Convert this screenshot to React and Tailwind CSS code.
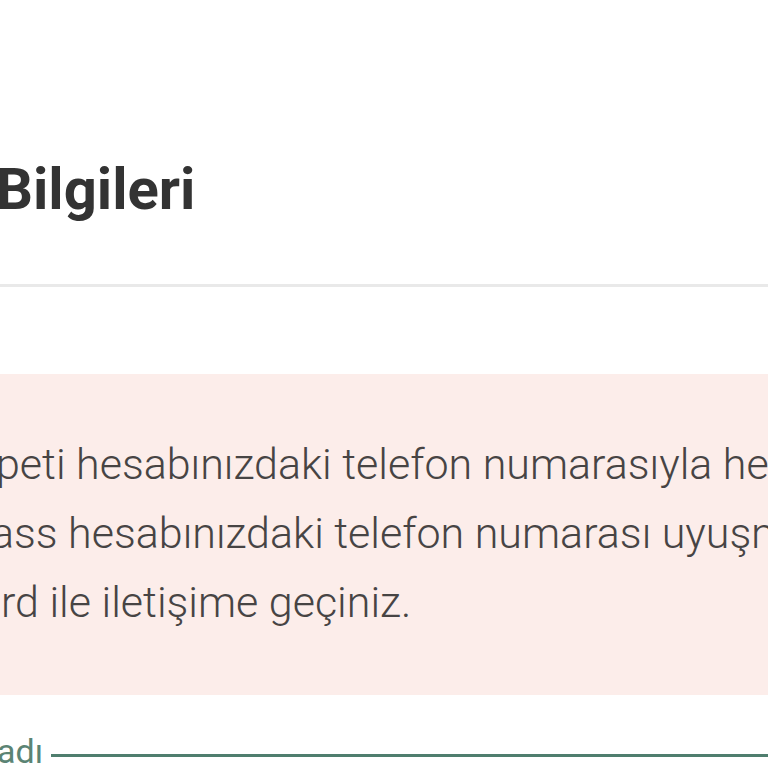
import React from "react";

const lines = [
  { text: "peti hesabınızdaki telefon numarasıyla hesabınızdaki", shift: "-ml-[4px]" },
  { text: "ass hesabınızdaki telefon numarası uyuşmuyor", shift: "-ml-[9px]" },
  { text: "rd ile iletişime geçiniz.", shift: "ml-[1px]" },
];

const App = () => {
  return (
    <div className="w-[768px] h-[768px] overflow-hidden bg-white font-['Roboto',sans-serif]">
      {/* Başlık */}
      <div className="pt-[155px]">
        <h1 className="-ml-[4px] whitespace-nowrap text-[58px] leading-[68px] font-bold text-[#333333]">
          Bilgileri
        </h1>
      </div>

      <div className="mt-[61px] h-[3px] bg-[#e9e9e9]"></div>

      {/* Uyarı kutusu */}
      <div className="mt-[87px] bg-[#fcedea] pt-[56px] pb-[58px]">
        {lines.map((line, index) => (
          <p
            key={index}
            className={`${line.shift} whitespace-nowrap text-[43px] leading-[69px] font-light text-[#474444]`}
          >
            {line.text}
          </p>
        ))}
      </div>

      {/* Form alanı */}
      <div className="mt-[36px] flex items-start">
        <span className="-ml-[3px] whitespace-nowrap text-[34px] leading-[40px] text-[#5b8474]">
          adı
        </span>
        <div className="ml-[8px] mt-[23px] h-[3px] flex-1 bg-[#4f7e6e]"></div>
      </div>
    </div>
  );
};

export default App;
